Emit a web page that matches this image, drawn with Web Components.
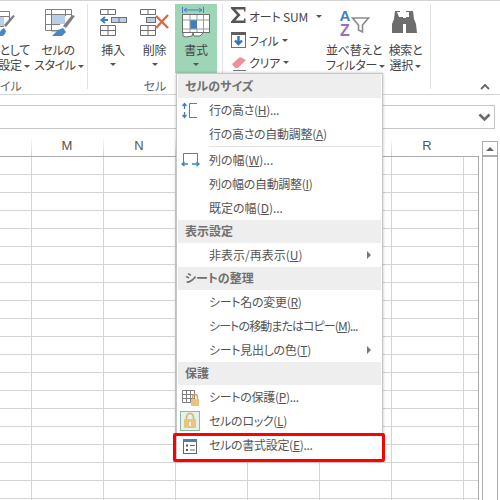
<!DOCTYPE html>
<html lang="ja">
<head>
<meta charset="utf-8">
<title>書式</title>
<style>
    html,body{ margin:0; height:100%; overflow:hidden; background:#fff; }
    body{
        font-family:"Noto Sans CJK JP","Liberation Sans",sans-serif;
        font-size:12px;
        color:#444;
        font-feature-settings:"palt";
    }
    svg{ display:block; }
</style>
</head>
<body>
<xl-app>
    <xl-ribbon>
        <rb-group label="イル" width="87" line label-x="8">
            <rb-button width="90" style="margin-left:-60px" align="end">
                <svg slot="icon" width="90" height="38" viewBox="-60 4 90 38"><g fill="none" stroke="#7f7f7f"><path d="M-16.500 11.500H9.500V20M-16.500 16.500H9.500M-2.500 11.500V31M-16.500 26.500H4"/></g><rect x="-10" y="17" width="14" height="9" fill="#b9cfe6"/><path d="M15 16L6 27l-2-2 9-10z" fill="#7f7f7f"/><path d="M-2 36l3-6 3-2 2 3-1 3-2 2z" fill="#4a86c5"/></svg>
                テーブルとして<br>書式設定 <i></i>
            </rb-button>
            <rb-button width="48" style="margin-left:4px">
                <svg slot="icon" width="48" height="38" viewBox="34 4 48 38"><g fill="none" stroke="#7f7f7f"><path d="M45.500 9.500H71.500V18M45.500 14.500H71.500M51.500 9.500V31H62M65.500 9.500V16M45.500 9.500V30.500H58M45.500 24.500H60"/></g><rect x="52" y="15" width="13" height="9" fill="#b9cfe6"/><path d="M75 16L66 28l-3-2 9-11z" fill="#7f7f7f"/><path d="M52 36l6-6 5-2 3 4-4 4z" fill="#4a86c5"/></svg>
                セルの<br>スタイル <i></i>
            </rb-button>
        </rb-group>
        <rb-group label="セル" width="134" line pad="4" label-x="67">
            <rb-button width="42" arrow-below>
                <svg slot="icon" width="42" height="38" viewBox="92 4 42 38"><g fill="none" stroke="#6f6f6f"><path d="M100.500 9.500h15v5h-15zM108 9.500v5M100.500 25.500h15v10h-15zM100.500 30.500h15M108 25.500v10"/></g><rect x="111.500" y="17.500" width="15" height="5" fill="#b9cfe6" stroke="#6f6f6f"/><path d="M119 17.500v5" stroke="#6f6f6f"/><path d="M108 20h-5M105 17l-3.500 3 3.500 3" fill="none" stroke="#3f7fc1" stroke-width="2"/></svg>
                挿入
            </rb-button>
            <rb-button width="41" arrow-below>
                <svg slot="icon" width="41" height="38" viewBox="135 4 41 38"><g fill="none" stroke="#6f6f6f"><path d="M141.500 9.500h15v5h-15zM149 9.500v5M141.500 25.500h15v10h-15zM141.500 30.500h15M149 25.500v10"/></g><rect x="147.500" y="17.500" width="9" height="5" fill="#b9cfe6" stroke="#6f6f6f"/><path d="M157 16l12 12M169 15l-12 13" stroke="#d9694a" stroke-width="2.400" fill="none"/></svg>
                削除
            </rb-button>
            <rb-button width="42" active arrow-below>
                <svg slot="icon" width="42" height="38" viewBox="176 4 42 38"><rect x="183.500" y="14.500" width="27" height="18" fill="#fff" stroke="#6f6f6f"/><rect x="191" y="20" width="7" height="9" fill="#3f7fc1"/><g fill="none" stroke="#9a9a9a"><path d="M191 15v17M198 15v5M198 29v3M204.500 15v17M184 20h26M184 29h26"/></g><path d="M184 33v3l3 1 6-1 1-3M194 33l1 3h6l3-3" fill="#fff" stroke="#6f6f6f"/><path d="M183.500 7v6M204.500 7v6" stroke="#3f7fc1"/><path d="M185 10h18M188 8l-3 2 3 2M200 8l3 2-3 2" fill="none" stroke="#3f7fc1"/></svg>
                書式
            </rb-button>
        </rb-group>
        <rb-group width="207" line pad="3">
            <div style="display:flex;flex-direction:column;width:100px">
                <rb-small arrow-gap="8" h="24">
                    <svg slot="icon" width="19" height="18" viewBox="0 0 19 18"><path d="M1 0H15.500V4.500H14V2.500H5.500L10.500 8 5.500 13.500H14V11.500H15.500V16H1V14.500L7 8 1 1.500z" fill="#555"/></svg>
                    オート SUM
                </rb-small>
                <rb-small arrow-gap="3" h="24">
                    <svg slot="icon" width="19" height="18" viewBox="0 0 19 18"><rect x="1.500" y="2.500" width="14" height="14" fill="#fff" stroke="#6f6f6f"/><rect x="1" y="1" width="15" height="3" fill="#5e5e5e"/><path d="M8.500 5v8M5 9.500l3.500 3.500L12 9.500" fill="none" stroke="#2f76bb" stroke-width="2.400"/></svg>
                    フィル
                </rb-small>
                <rb-small arrow-gap="3" h="21">
                    <svg slot="icon" width="19" height="18" viewBox="0 0 19 18"><path d="M2 10l8-7 6 3-8 8H5z" fill="#ee8f9c"/><path d="M3 16.500h13" stroke="#777"/></svg>
                    クリア
                </rb-small>
            </div>
            <rb-button width="56">
                <svg slot="icon" width="56" height="38" viewBox="326 4 56 38"><text x="339.500" y="21" font-family="Liberation Sans" font-weight="bold" font-size="15" fill="#3f7fc1">A</text><text x="340" y="36" font-family="Liberation Sans" font-weight="bold" font-size="16" fill="#9b6bbd">Z</text><path d="M352.500 18h16l-6 7v7l-4-2v-5z" fill="#fff" stroke="#8a8a8a" stroke-width="1.600"/></svg>
                並べ替えと<br>フィルター <i></i>
            </rb-button>
            <rb-button width="45" style="margin-left:1px">
                <svg slot="icon" width="45" height="38" viewBox="383 4 45 38"><path d="M397 12h3v-1h-5l-1 8-2 5v9h11V17h-4zM409 12h-3v-1h7l1 8 2 5 1 9h-11V17h3z" fill="#6d6d6d"/><path d="M404 18h-1v6h3v-6z" fill="#6d6d6d"/></svg>
                検索と<br>選択 <i></i>
            </rb-button>
        </rb-group>
        <rb-collapse></rb-collapse>
    </xl-ribbon>
    <xl-formula></xl-formula>
    <xl-sheet>
        <col-head slot="head" label="M"></col-head>
        <col-head slot="head" label="N"></col-head>
        <col-head slot="head"></col-head>
        <col-head slot="head"></col-head>
        <col-head slot="head"></col-head>
        <col-head slot="head" label="R"></col-head>
    </xl-sheet>
    <fmt-menu>
        <menu-head first>セルのサイズ</menu-head>
        <menu-item>
            <svg slot="icon" width="31" height="24" viewBox="0 0 31 24"><path d="M19 5.500h-7.500v14H19" fill="none" stroke="#777"/><path d="M6.500 6v5M6.500 14v5M4.500 8l2-2.500 2 2.500M4.500 17l2 2.500 2-2.500" fill="none" stroke="#3f7fc1" stroke-width="1.300"/></svg>
            行の高さ(<u>H</u>)...
        </menu-item>
        <menu-item>行の高さの自動調整(<u>A</u>)</menu-item>
        <menu-line></menu-line>
        <menu-item style="letter-spacing:0">
            <svg slot="icon" width="31" height="24" viewBox="0 0 31 24"><path d="M5.500 14V5.500h14V14" fill="none" stroke="#777"/><path d="M5 16h5M14 16h6M6.500 14l-2.500 2 2.500 2M18.500 14l2.500 2-2.500 2" fill="none" stroke="#3f7fc1" stroke-width="1.300"/></svg>
            列の幅(<u>W</u>)...
        </menu-item>
        <menu-item>列の幅の自動調整(<u>I</u>)</menu-item>
        <menu-item style="letter-spacing:0">既定の幅(<u>D</u>)...</menu-item>
        <menu-head>表示設定</menu-head>
        <menu-item sub style="letter-spacing:0">非表示/再表示(<u>U</u>)</menu-item>
        <menu-head>シートの整理</menu-head>
        <menu-item>シート名の変更(<u>R</u>)</menu-item>
        <menu-item style="letter-spacing:-.9px">シートの移動またはコピー(<u>M</u>)...</menu-item>
        <menu-item sub>シート見出しの色(<u>T</u>)</menu-item>
        <menu-head>保護</menu-head>
        <menu-item>
            <svg slot="icon" width="31" height="24" viewBox="0 0 31 24"><path d="M4.500 5.500h12v12h-12zM4.500 9.500h12M4.500 13.500h12M8.500 5.500v12M12.500 5.500v12" fill="none" stroke="#808080"/><rect x="13" y="14" width="8" height="7" fill="#edc27d"/><path d="M14.500 14v-2a2.500 2.500 0 0 1 5 0v2" fill="none" stroke="#c9a468" stroke-width="1.300"/></svg>
            シートの保護(<u>P</u>)...
        </menu-item>
        <menu-item>
            <svg slot="icon" width="31" height="24" viewBox="0 0 31 24"><rect x="2.500" y="2.500" width="19" height="19" fill="#e5f2ea" stroke="#86bfa0"/><rect x="6" y="10" width="12" height="9" rx="1" fill="#edc27d"/><path d="M8.500 10V8a3.500 3.500 0 0 1 7 0v2" fill="none" stroke="#d9b070" stroke-width="1.600"/><rect x="11" y="13" width="2" height="4" fill="#fff"/></svg>
            セルのロック(<u>L</u>)
        </menu-item>
        <menu-item>
            <svg slot="icon" width="31" height="24" viewBox="0 0 31 24"><rect x="5.500" y="6.500" width="13" height="14" fill="#fff" stroke="#666"/><rect x="5" y="6" width="14" height="3" fill="#4a7ebb"/><path d="M8 12.500h2M8 17h2" stroke="#555" stroke-width="2"/><path d="M12 12.500h5M12 17h5" stroke="#666"/></svg>
            セルの書式設定(<u>E</u>)...
        </menu-item>
        <red-frame></red-frame>
    </fmt-menu>
</xl-app>
<script>
class XlApp extends HTMLElement {
    constructor() {
        super();
        this.attachShadow({ mode: 'open' });
        this.shadowRoot.innerHTML = `
        <style>
            :host{ display:flex; flex-direction:column; width:500px; height:500px; position:relative; overflow:hidden; }
        </style>
        <slot></slot>`;
    }
}
class XlRibbon extends HTMLElement {
    constructor() {
        super();
        this.attachShadow({ mode: 'open' });
        this.shadowRoot.innerHTML = `
        <style>
            :host{
                display:flex;
                height:95px;
                box-sizing:border-box;
                border-top:1px solid #d4d4d4;
                border-bottom:1px solid #d4d4d4;
                padding-top:3px;
                flex:none;
            }
        </style>
        <slot></slot>`;
    }
}
class RbGroup extends HTMLElement {
    constructor() {
        super();
        this.attachShadow({ mode: 'open' });
        const label = this.getAttribute('label') || '';
        const labelX = this.getAttribute('label-x') || 0;
        this.shadowRoot.innerHTML = `
        <style>
            :host{
                display:block;
                flex:none;
                position:relative;
                width:${this.getAttribute('width')}px;
                height:85px;
                color:#444;
            }
            :host([line]){ box-shadow:1px 0 0 #e1e1e1; margin-right:1px; }
            #row{ display:flex; height:69px; padding-left:${this.getAttribute('pad') || 0}px; }
            #label{
                text-align:center;
                width:${labelX * 2}px;
                line-height:16px;
                margin-top:5px;
                color:#666;
                font-size:12px;
                white-space:nowrap;
            }
        </style>
        <div id="row"><slot></slot></div>
        <div id="label">${label}</div>`;
    }
}
class RbButton extends HTMLElement {
    constructor() {
        super();
        this.attachShadow({ mode: 'open' });
        const end = this.getAttribute('align') === 'end';
        this.shadowRoot.innerHTML = `
        <style>
            :host{
                display:flex;
                flex-direction:column;
                flex:none;
                width:${this.getAttribute('width')}px;
                height:69px;
                font-size:12px;
                letter-spacing:-.3px;
                line-height:15px;
                text-align:${end ? 'right' : 'center'};
                white-space:nowrap;
            }
            :host([active]){ background:#9fd5b7; }
            #icon{ height:38px; flex:none; }
            #arrow{
                display:none;
                width:0;height:0;
                border:3px solid transparent;
                border-top:3px solid #555;
                border-bottom:0;
                margin:6px auto 0;
            }
            :host([arrow-below]) #arrow{ display:block; }
            ::slotted(i){
                display:inline-block;
                width:0;height:0;
                border:3px solid transparent;
                border-top:3px solid #555;
                border-bottom:0;
                vertical-align:2px;
            }
        </style>
        <div id="icon"><slot name="icon"></slot></div>
        <div id="text"><slot></slot></div>
        <div id="arrow"></div>`;
    }
}
class RbSmall extends HTMLElement {
    constructor() {
        super();
        this.attachShadow({ mode: 'open' });
        this.shadowRoot.innerHTML = `
        <style>
            :host{
                display:flex;
                align-items:center;
                height:${this.getAttribute('h')}px;
                padding-left:4px;
                font-size:12px;
                letter-spacing:-.2px;
                white-space:nowrap;
            }
            #icon{ width:19px; flex:none; }
            #arrow{
                width:0;height:0;
                border:3px solid transparent;
                border-top:3px solid #555;
                border-bottom:0;
                margin-left:${this.getAttribute('arrow-gap')}px;
            }
        </style>
        <div id="icon"><slot name="icon"></slot></div>
        <span><slot></slot></span>
        <div id="arrow"></div>`;
    }
}
class RbCollapse extends HTMLElement {
    constructor() {
        super();
        this.attachShadow({ mode: 'open' });
        this.shadowRoot.innerHTML = `
        <style>
            :host{ display:block; margin:79px 0 0 48px; }
        </style>
        <svg width="12" height="8" viewBox="0 0 12 8" style="display:block"><path d="M2 6l4-4 4 4" fill="none" stroke="#666" stroke-width="1.800"/></svg>`;
    }
}
class XlFormula extends HTMLElement {
    constructor() {
        super();
        this.attachShadow({ mode: 'open' });
        this.shadowRoot.innerHTML = `
        <style>
            :host{
                display:flex;
                justify-content:flex-end;
                align-items:center;
                flex:none;
                box-sizing:border-box;
                width:495px;
                height:24px;
                margin-top:10px;
                padding-right:3px;
                border:1px solid #c6c6c6;
                border-left:0;
            }
        </style>
        <svg width="13" height="9" viewBox="0 0 13 9" style="display:block"><path d="M1.500 1.500l5 5 5-5" fill="none" stroke="#6a6a6a" stroke-width="2.600"/></svg>`;
    }
}
class XlSheet extends HTMLElement {
    constructor() {
        super();
        this.attachShadow({ mode: 'open' });
        this.shadowRoot.innerHTML = `
        <style>
            :host{ display:grid; grid-template-columns:479px 3px 16px; flex:1; min-height:0; }
            #main{ display:flex; flex-direction:column; }
            #head{
                display:flex;
                height:28px;
                box-sizing:border-box;
                border-bottom:1px solid #ababab;
                padding-left:31px;
                flex:none;
            }
            #cells{
                flex:1;
                border-right:1px solid #ababab;
                background-color:#fff;
                background-image:
                    repeating-linear-gradient(to bottom, transparent 0 17px, #d4d4d4 17px 18px),
                    repeating-linear-gradient(to right, #d4d4d4 0 1px, transparent 1px 72px);
                background-position:0 0, 31px 0;
            }
            #bar{
                grid-column:3;
                display:flex;
                flex-direction:column;
                margin-top:12px;
                box-sizing:border-box;
                border:1px solid #ababab;
                border-bottom:0;
            }
            #up{
                height:13px;
                flex:none;
                border-bottom:2px solid #ababab;
                display:flex;
                align-items:center;
                justify-content:center;
            }
            #up b{
                width:0;height:0;
                border:4px solid transparent;
                border-bottom:4px solid #666;
                border-top:0;
            }
        </style>
        <div id="main">
            <div id="head"><slot name="head"></slot></div>
            <div id="cells"></div>
        </div>
        <div id="bar"><div id="up"><b></b></div></div>`;
    }
}
class ColHead extends HTMLElement {
    constructor() {
        super();
        this.attachShadow({ mode: 'open' });
        this.shadowRoot.innerHTML = `
        <style>
            :host{
                display:flex;
                align-items:center;
                justify-content:center;
                flex:none;
                width:72px;
                box-sizing:border-box;
                padding-top:6px;
                font-family:"Liberation Sans",sans-serif;
                font-size:13px;
                color:#555;
                background:linear-gradient(to bottom,#fff 8px,#d4d4d4) left bottom / 1px 100% no-repeat;
            }
        </style>
        <span>${this.getAttribute('label') || ''}</span>`;
    }
}
class FmtMenu extends HTMLElement {
    constructor() {
        super();
        this.attachShadow({ mode: 'open' });
        this.shadowRoot.innerHTML = `
        <style>
            :host{
                position:absolute;
                left:176px;
                top:73px;
                width:207px;
                box-sizing:border-box;
                height:389px;
                padding:0 1px 1px;
                background:#fff;
                border:1px solid #c6c6c6;
                box-shadow:0 0 3px rgba(0,0,0,.25);
                display:flex;
                flex-direction:column;
                font-size:12px;
                letter-spacing:-.3px;
                color:#555;
            }
        </style>
        <slot></slot>`;
    }
}
class MenuHead extends HTMLElement {
    constructor() {
        super();
        this.attachShadow({ mode: 'open' });
        this.shadowRoot.innerHTML = `
        <style>
            :host{
                display:flex;
                align-items:center;
                height:23px;
                flex:none;
                padding-left:7px;
                background:#eeeeee;
                font-weight:700;
                letter-spacing:0;
                color:#707070;
            }
            :host([first]){ height:24px; }
            span{ margin-bottom:2px; }
        </style>
        <span><slot></slot></span>`;
    }
}
class MenuItem extends HTMLElement {
    constructor() {
        super();
        this.attachShadow({ mode: 'open' });
        this.shadowRoot.innerHTML = `
        <style>
            :host{
                display:flex;
                align-items:center;
                height:24px;
                flex:none;
                white-space:nowrap;
            }
            #icon{ width:31px; flex:none; height:24px; }
            #label{ flex:1; margin-bottom:2px; }
            #sub{ display:none; width:0; height:0; margin-right:10px;
                border:4px solid transparent; border-left:4px solid #777; border-right:0; }
            :host([sub]) #sub{ display:block; }
        </style>
        <div id="icon"><slot name="icon"></slot></div>
        <span id="label"><slot></slot></span>
        <div id="sub"></div>`;
    }
}
class MenuLine extends HTMLElement {
    constructor() {
        super();
        this.attachShadow({ mode: 'open' });
        this.shadowRoot.innerHTML = `
        <style>
            :host{
                display:block;
                flex:none;
                height:1px;
                margin:0 0 1px 31px;
                background:#e1e1e1;
            }
        </style>`;
    }
}
class RedFrame extends HTMLElement {
    constructor() {
        super();
        this.attachShadow({ mode: 'open' });
        this.shadowRoot.innerHTML = `
        <style>
            :host{
                position:absolute;
                left:-4px;
                top:359px;
                width:212px;
                height:29px;
                box-sizing:border-box;
                border:3px solid #fe0000;
                border-radius:2px;
            }
        </style>`;
    }
}
customElements.define('xl-app', XlApp);
customElements.define('xl-ribbon', XlRibbon);
customElements.define('rb-group', RbGroup);
customElements.define('rb-button', RbButton);
customElements.define('rb-small', RbSmall);
customElements.define('rb-collapse', RbCollapse);
customElements.define('xl-formula', XlFormula);
customElements.define('xl-sheet', XlSheet);
customElements.define('col-head', ColHead);
customElements.define('fmt-menu', FmtMenu);
customElements.define('menu-head', MenuHead);
customElements.define('menu-item', MenuItem);
customElements.define('menu-line', MenuLine);
customElements.define('red-frame', RedFrame);
</script>
</body>
</html>
